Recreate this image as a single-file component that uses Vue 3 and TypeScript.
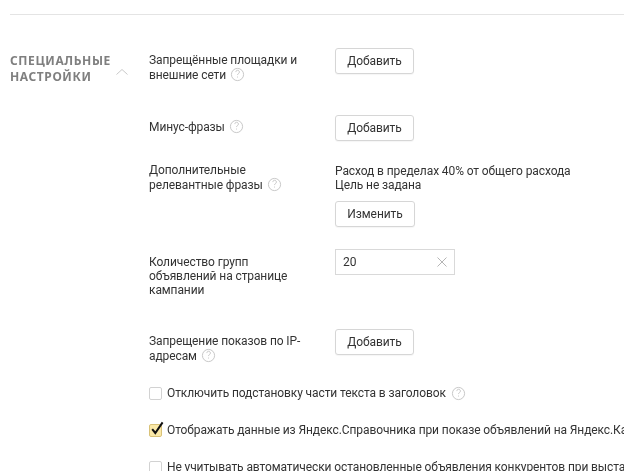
<script setup lang="ts">
const hint = 'M6.2 5.4a1.9 1.9 0 1 1 2.9 1.6c-.7.4-1.1.8-1.1 1.6M8 10.2v1'
</script>

<template>
  <div class="page">
    <div class="rule"></div>
    <div class="section">
      <div class="heading">
        <h2 class="title">СПЕЦИАЛЬНЫЕ<br />НАСТРОЙКИ</h2>
        <svg class="chevron" width="14" height="8" viewBox="0 0 14 8"><path d="M1.5 6.5 7 1.5l5.5 5" fill="none" stroke="#c9c9c9" stroke-width="1" /></svg>
      </div>
      <div class="body">
        <div class="row r1">
          <div class="label">Запрещённые площадки и<br />внешние сети
            <svg class="hint" viewBox="0 0 16 16"><circle cx="8" cy="8" r="6.5" /><path :d="hint" /></svg>
          </div>
          <div class="control"><button class="btn">Добавить</button></div>
        </div>
        <div class="row r2">
          <div class="label mid">Минус-фразы
            <svg class="hint" viewBox="0 0 16 16"><circle cx="8" cy="8" r="6.5" /><path :d="hint" /></svg>
          </div>
          <div class="control"><button class="btn">Добавить</button></div>
        </div>
        <div class="row r3">
          <div class="label">Дополнительные<br />релевантные фразы
            <svg class="hint" viewBox="0 0 16 16"><circle cx="8" cy="8" r="6.5" /><path :d="hint" /></svg>
          </div>
          <div class="control">
            <p class="info">Расход в пределах 40% от общего расхода<br />Цель не задана</p>
            <button class="btn wide">Изменить</button>
          </div>
        </div>
        <div class="row r4">
          <div class="label">Количество групп<br />объявлений на странице<br />кампании</div>
          <div class="control">
            <div class="input">
              <span>20</span>
              <svg width="10" height="10" viewBox="0 0 10 10"><path d="M.5.5l9 9M9.5.5l-9 9" stroke="#b5b5b5" fill="none" /></svg>
            </div>
          </div>
        </div>
        <div class="row r5">
          <div class="label">Запрещение показов по IP-<br />адресам
            <svg class="hint" viewBox="0 0 16 16"><circle cx="8" cy="8" r="6.5" /><path :d="hint" /></svg>
          </div>
          <div class="control"><button class="btn">Добавить</button></div>
        </div>
        <div class="check c1">
          <span class="box"></span>
          <span class="text">Отключить подстановку части текста в заголовок</span>
          <svg class="hint" viewBox="0 0 16 16"><circle cx="8" cy="8" r="6.5" /><path :d="hint" /></svg>
        </div>
        <div class="check c2">
          <span class="box on">
            <svg class="tick" width="16" height="16" viewBox="0 0 16 16"><path d="M3.2 8.2 6.3 12 13.6 1.4" fill="none" stroke="#111" stroke-width="2" /></svg>
          </span>
          <span class="text">Отображать данные из Яндекс.Справочника при показе объявлений на Яндекс.Картах</span>
        </div>
        <div class="check c3">
          <span class="box"></span>
          <span class="text">Не учитывать автоматически остановленные объявления конкурентов при выставлении ставок</span>
        </div>
      </div>
    </div>
  </div>
</template>

<style>
html, body { margin: 0; background: #fff; overflow: hidden; }
</style>

<style scoped>
.page {
  width: 624px;
  height: 471px;
  overflow: hidden;
  font-family: Roboto, "Noto Sans", sans-serif;
  font-size: 12px;
  letter-spacing: -0.1px;
  line-height: 14px;
  color: #333;
  box-sizing: border-box;
  padding-top: 14px;
  filter: blur(0.35px);
}
.rule { height: 1px; margin-left: 10px; background: #e4e4e4; }
.section { display: flex; padding-left: 10px; }
.heading { width: 139px; flex: none; position: relative; padding-top: 38px; }
.title {
  margin: 0;
  font-family: "Noto Sans", sans-serif;
  font-size: 12px;
  line-height: 16px;
  font-weight: 700;
  letter-spacing: 0.6px;
  color: #7f7f7f;
}
.chevron { position: absolute; left: 105px; top: 53px; }
.body { flex: 1; min-width: 0; }
.row { display: flex; }
.label { width: 186px; flex: none; }
.mid { padding-top: 4px; }
.r1 { padding-top: 33px; }
.r1 .label { padding-top: 5px; }
.r2 { margin-top: 33px; }
.r3 { margin-top: 23px; }
.r3 .label { margin-top: -1px; }
.r4 { margin-top: 22px; }
.r4 .label { padding-top: 6px; }
.r5 { margin-top: 32px; }
.r5 .label { padding-top: 5px; }
.control { min-width: 0; }
.info { margin: 0 0 9px; white-space: nowrap; }
.btn {
  display: block;
  width: 79px;
  height: 26px;
  padding: 0;
  border: 1px solid #d6d6d6;
  border-radius: 3px;
  background: #fff;
  color: #333;
  font: inherit;
  letter-spacing: inherit;
  box-shadow: 0 1px 1px rgba(0, 0, 0, 0.04);
}
.wide { width: 80px; }
.input {
  box-sizing: border-box;
  width: 120px;
  height: 26px;
  border: 1px solid #d9d9d9;
  display: flex;
  align-items: center;
  justify-content: space-between;
  padding: 0 7px 0 7px;
}
.hint {
  width: 15px;
  height: 15px;
  vertical-align: -3px;
  margin-left: 1px;
  fill: none;
  stroke: #c4c4c4;
  stroke-width: 1;
}
.check { display: flex; align-items: center; white-space: nowrap; height: 14px; }
.c1 { margin-top: 23px; }
.c2 { margin-top: 23px; }
.c3 { margin-top: 23px; }
.box {
  box-sizing: border-box;
  width: 13px;
  height: 13px;
  flex: none;
  border: 1px solid #d2d2d2;
  border-radius: 2px;
  margin-right: 5px;
  position: relative;
}
.on { background: #fbe9a8; border-color: #d9c278; }
.tick { position: absolute; left: -1px; top: -4px; }
.c1 .hint { margin-left: 5px; }
</style>
